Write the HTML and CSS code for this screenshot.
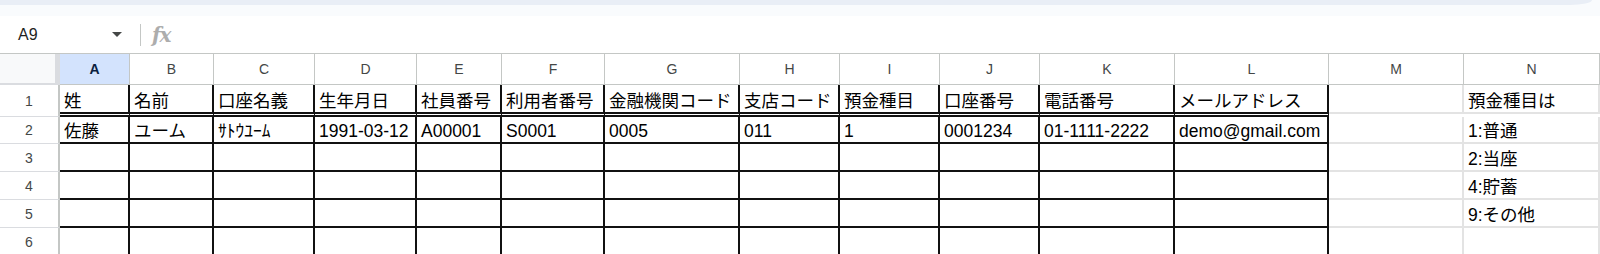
FILE: index.html
```html
<!DOCTYPE html>
<html lang="ja">
<head>
    <meta charset="UTF-8">
    <title>口座情報 - スプレッドシート</title>
    <link rel="stylesheet" href="styles.css">
</head>
<body>
    <!-- Toolbar edge -->
    <div class="toolbar-edge">
        <div class="toolbar-tail"></div>
    </div>

    <!-- Formula bar -->
    <div class="formula-bar">
        <div class="name-box">
            <span class="cell-ref">A9</span>
            <span class="caret"></span>
        </div>
        <div class="divider"></div>
        <span class="fx">fx</span>
    </div>

    <!-- Sheet grid -->
    <div class="sheet">
        <!-- Column headers -->
        <div class="corner"></div>
        <div class="ch sel">A</div>
        <div class="ch">B</div>
        <div class="ch">C</div>
        <div class="ch">D</div>
        <div class="ch">E</div>
        <div class="ch">F</div>
        <div class="ch">G</div>
        <div class="ch">H</div>
        <div class="ch">I</div>
        <div class="ch">J</div>
        <div class="ch">K</div>
        <div class="ch">L</div>
        <div class="ch">M</div>
        <div class="ch">N</div>

        <!-- Row 1 -->
        <div class="rh">1</div>
        <div class="c b r1">姓</div>
        <div class="c b r1">名前</div>
        <div class="c b r1">口座名義</div>
        <div class="c b r1">生年月日</div>
        <div class="c b r1">社員番号</div>
        <div class="c b r1">利用者番号</div>
        <div class="c b r1">金融機関コード</div>
        <div class="c b r1">支店コード</div>
        <div class="c b r1">預金種目</div>
        <div class="c b r1">口座番号</div>
        <div class="c b r1">電話番号</div>
        <div class="c b r1">メールアドレス</div>
        <div class="c r1"></div>
        <div class="c r1">預金種目は</div>

        <!-- Row 2 -->
        <div class="rh">2</div>
        <div class="c b">佐藤</div>
        <div class="c b">ユーム</div>
        <div class="c b">ｻﾄｳﾕｰﾑ</div>
        <div class="c b">1991-03-12</div>
        <div class="c b">A00001</div>
        <div class="c b">S0001</div>
        <div class="c b">0005</div>
        <div class="c b">011</div>
        <div class="c b">1</div>
        <div class="c b">0001234</div>
        <div class="c b">01-1111-2222</div>
        <div class="c b">demo@gmail.com</div>
        <div class="c"></div>
        <div class="c">1:普通</div>

        <!-- Row 3 -->
        <div class="rh">3</div>
        <div class="c b"></div>
        <div class="c b"></div>
        <div class="c b"></div>
        <div class="c b"></div>
        <div class="c b"></div>
        <div class="c b"></div>
        <div class="c b"></div>
        <div class="c b"></div>
        <div class="c b"></div>
        <div class="c b"></div>
        <div class="c b"></div>
        <div class="c b"></div>
        <div class="c"></div>
        <div class="c">2:当座</div>

        <!-- Row 4 -->
        <div class="rh">4</div>
        <div class="c b"></div>
        <div class="c b"></div>
        <div class="c b"></div>
        <div class="c b"></div>
        <div class="c b"></div>
        <div class="c b"></div>
        <div class="c b"></div>
        <div class="c b"></div>
        <div class="c b"></div>
        <div class="c b"></div>
        <div class="c b"></div>
        <div class="c b"></div>
        <div class="c"></div>
        <div class="c">4:貯蓄</div>

        <!-- Row 5 -->
        <div class="rh">5</div>
        <div class="c b"></div>
        <div class="c b"></div>
        <div class="c b"></div>
        <div class="c b"></div>
        <div class="c b"></div>
        <div class="c b"></div>
        <div class="c b"></div>
        <div class="c b"></div>
        <div class="c b"></div>
        <div class="c b"></div>
        <div class="c b"></div>
        <div class="c b"></div>
        <div class="c"></div>
        <div class="c">9:その他</div>

        <!-- Row 6 -->
        <div class="rh">6</div>
        <div class="c b"></div>
        <div class="c b"></div>
        <div class="c b"></div>
        <div class="c b"></div>
        <div class="c b"></div>
        <div class="c b"></div>
        <div class="c b"></div>
        <div class="c b"></div>
        <div class="c b"></div>
        <div class="c b"></div>
        <div class="c b"></div>
        <div class="c b"></div>
        <div class="c"></div>
        <div class="c"></div>
    </div>
</body>
</html>
```

FILE: styles.css
```css
* {
    margin: 0;
    padding: 0;
    box-sizing: border-box;
}

body {
    font-family: "Liberation Sans", Arial, "Noto Sans CJK JP", sans-serif;
    background: #fff;
    color: #000;
    width: 1600px;
    height: 254px;
    overflow: hidden;
}

/* Toolbar edge */
.toolbar-edge {
    height: 16px;
    background: #f9fbfd;
}

.toolbar-tail {
    height: 5px;
    margin-right: 8px;
    background: #e9eef6;
    border-bottom-right-radius: 22px 5px;
}

/* Formula bar */
.formula-bar {
    height: 37px;
    display: flex;
    align-items: center;
}

.name-box {
    width: 128px;
    display: flex;
    align-items: center;
    justify-content: space-between;
    padding: 0 6px 0 18px;
}

.cell-ref {
    font-size: 16px;
    color: #1f1f1f;
}

.caret {
    width: 0;
    height: 0;
    border-left: 5px solid transparent;
    border-right: 5px solid transparent;
    border-top: 5px solid #444746;
}

.divider {
    width: 1px;
    height: 22px;
    margin: 0 11px 0 12px;
    background: #c4c7c5;
}

.fx {
    font-family: "DejaVu Serif", serif;
    font-style: italic;
    font-weight: bold;
    font-size: 20px;
    color: #adadad;
    letter-spacing: -1px;
}

/* Sheet grid */
.sheet {
    display: grid;
    grid-template-columns: 60px 70px 84px 101px 102px 85px 103px 135px 100px 100px 100px 135px 154px 135px 136px;
    grid-template-rows: 31px 32px 27px 28px 28px 28px 28px;
    border-top: 1px solid #c4c7c5;
}

.corner {
    background: #f8f9fa;
    border-right: 5px solid #dadce0;
    border-bottom: 2px solid #dadce0;
}

.ch {
    display: flex;
    align-items: center;
    justify-content: center;
    font-size: 14px;
    color: #444746;
    border-right: 1px solid #c4c7c5;
    border-bottom: 1px solid #c4c7c5;
}

.ch.sel {
    background: #d3e3fd;
    color: #0b1f3f;
    font-weight: bold;
}

.rh {
    display: flex;
    align-items: center;
    justify-content: center;
    font-size: 14px;
    color: #444746;
    border-right: 2px solid #c4c7c5;
    border-bottom: 1px solid #dadce0;
}

/* Cells */
.c {
    display: flex;
    align-items: flex-end;
    padding: 0 4px;
    font-size: 17.5px;
    line-height: 22px;
    white-space: nowrap;
    overflow: hidden;
    border-right: 2px solid #e3e3e3;
    border-bottom: 2px solid #e3e3e3;
}

.c.r1 {
    margin-bottom: 3px;
}

.c.b {
    border-right: 2px solid #111;
    border-bottom: 2px solid #111;
}

.c.b.r1 {
    margin-bottom: 0;
    border-bottom: 5px double #111;
}
```
